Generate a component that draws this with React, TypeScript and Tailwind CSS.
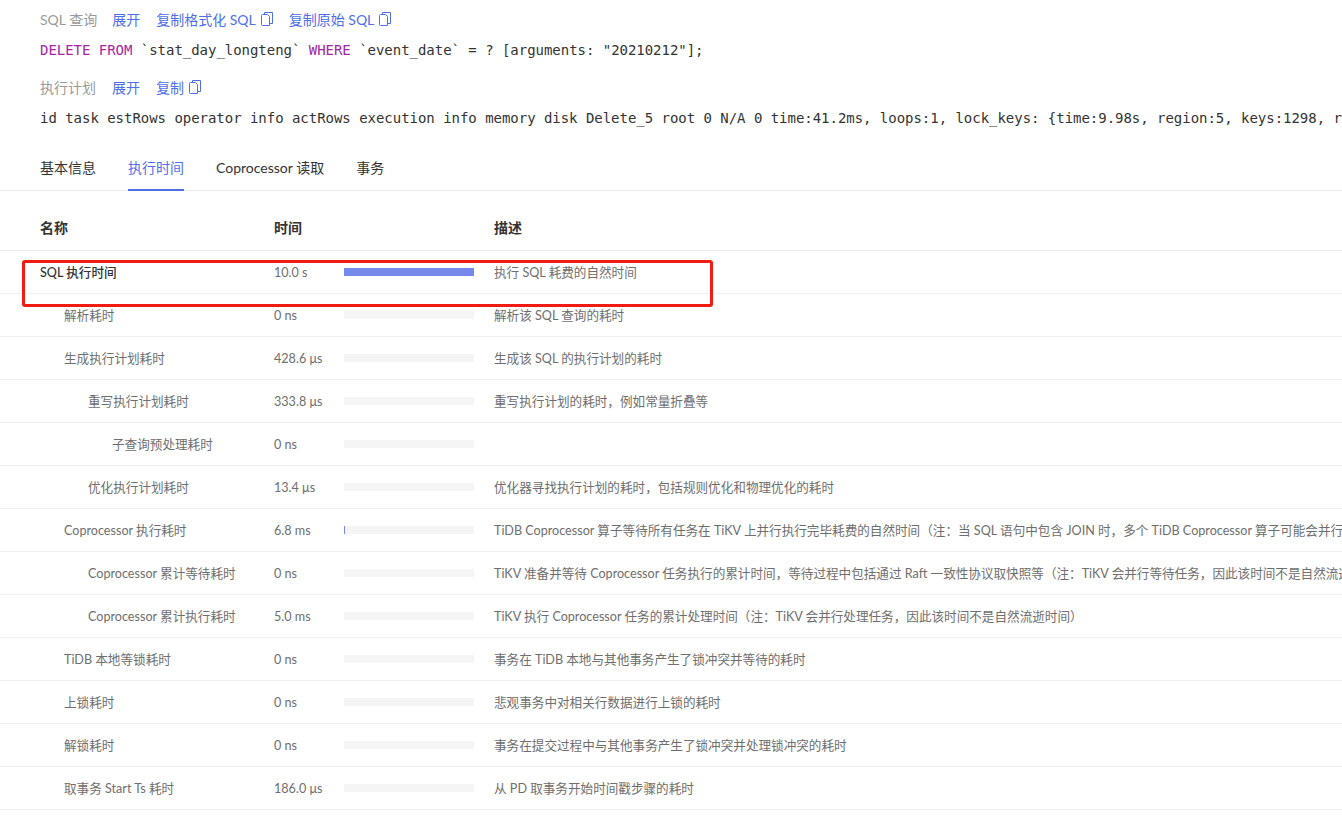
const fontSans = "font-['Lato','Noto_Sans_CJK_SC',sans-serif]";
const mono = "font-['DejaVu_Sans_Mono',monospace] tracking-[-0.03px]";

function CopyIcon() {
  return (
    <svg width="12" height="14" viewBox="0 0 12 14" fill="none" className="ml-[5px] inline-block">
      <path d="M3.5 2 L3.5 0.5 L11.5 0.5 L11.5 11.5 L9 11.5" stroke="#4f6fe8" strokeWidth="1" />
      <path d="M1.5 2.5 L6.5 2.5 L8.5 4.5 L8.5 13.5 L1.5 13.5 Q0.5 13.5 0.5 12.5 L0.5 3.5 Q0.5 2.5 1.5 2.5 Z" stroke="#4f6fe8" strokeWidth="1" />
    </svg>
  );
}

const rows: { name: string; indent: string; time: string; bar: number; desc: string; bold?: boolean }[] = [
  { name: "SQL 执行时间", indent: "pl-10", time: "10.0 s", bar: 130, desc: "执行 SQL 耗费的自然时间", bold: true },
  { name: "解析耗时", indent: "pl-16", time: "0 ns", bar: 0, desc: "解析该 SQL 查询的耗时" },
  { name: "生成执行计划耗时", indent: "pl-16", time: "428.6 μs", bar: 0, desc: "生成该 SQL 的执行计划的耗时" },
  { name: "重写执行计划耗时", indent: "pl-22", time: "333.8 μs", bar: 0, desc: "重写执行计划的耗时，例如常量折叠等" },
  { name: "子查询预处理耗时", indent: "pl-28", time: "0 ns", bar: 0, desc: "" },
  { name: "优化执行计划耗时", indent: "pl-22", time: "13.4 μs", bar: 0, desc: "优化器寻找执行计划的耗时，包括规则优化和物理优化的耗时" },
  { name: "Coprocessor 执行耗时", indent: "pl-16", time: "6.8 ms", bar: 1, desc: "TiDB Coprocessor 算子等待所有任务在 TiKV 上并行执行完毕耗费的自然时间（注：当 SQL 语句中包含 JOIN 时，多个 TiDB Coprocessor 算子可能会并行执行，因此该时间不一定等于实际时间）" },
  { name: "Coprocessor 累计等待耗时", indent: "pl-22", time: "0 ns", bar: 0, desc: "TiKV 准备并等待 Coprocessor 任务执行的累计时间，等待过程中包括通过 Raft 一致性协议取快照等（注：TiKV 会并行等待任务，因此该时间不是自然流逝时间）" },
  { name: "Coprocessor 累计执行耗时", indent: "pl-22", time: "5.0 ms", bar: 0, desc: "TiKV 执行 Coprocessor 任务的累计处理时间（注：TiKV 会并行处理任务，因此该时间不是自然流逝时间）" },
  { name: "TiDB 本地等锁耗时", indent: "pl-16", time: "0 ns", bar: 0, desc: "事务在 TiDB 本地与其他事务产生了锁冲突并等待的耗时" },
  { name: "上锁耗时", indent: "pl-16", time: "0 ns", bar: 0, desc: "悲观事务中对相关行数据进行上锁的耗时" },
  { name: "解锁耗时", indent: "pl-16", time: "0 ns", bar: 0, desc: "事务在提交过程中与其他事务产生了锁冲突并处理锁冲突的耗时" },
  { name: "取事务 Start Ts 耗时", indent: "pl-16", time: "186.0 μs", bar: 0, desc: "从 PD 取事务开始时间戳步骤的耗时" },
];

export default function App() {
  return (
    <div className={`relative h-[815px] w-[1342px] overflow-hidden bg-white ${fontSans} text-[12.6px] text-[#6e6e6e]`}>
      <div className="px-10 pt-[9px] text-[14px]">
        <div className="flex h-[20px] items-center">
          <span className="mr-[15px] text-[#999]">SQL 查询</span>
          <span className="mr-4 text-[#4f6fe8]">展开</span>
          <span className="mr-4 flex items-center text-[#4f6fe8]">复制格式化 SQL<CopyIcon /></span>
          <span className="flex items-center text-[#4f6fe8]">复制原始 SQL<CopyIcon /></span>
        </div>
        <div className={`mt-[11px] h-[20px] whitespace-nowrap ${mono} text-[14px] leading-[20px] text-[#333]`}>
          <span className="text-[#a626a4]">DELETE FROM</span> `stat_day_longteng` <span className="text-[#a626a4]">WHERE</span> `event_date` = ? [arguments: "20210212"];
        </div>
        <div className="mt-[17px] flex h-[20px] items-center">
          <span className="mr-4 text-[#999]">执行计划</span>
          <span className="mr-4 text-[#4f6fe8]">展开</span>
          <span className="flex items-center text-[#4f6fe8]">复制<CopyIcon /></span>
        </div>
        <div className={`mt-[11px] h-[20px] whitespace-nowrap ${mono} text-[14px] leading-[20px] text-[#333]`}>
          id task estRows operator info actRows execution info memory disk Delete_5 root 0 N/A 0 time:41.2ms, loops:1, lock_keys: {"{"}time:9.98s, region:5, keys:1298, resolve_lock:1ms
        </div>
      </div>

      <div className="mt-[19px] flex h-[44px] gap-8 border-b border-[#ebebeb] px-10 pb-[3px] text-[14px] text-[#333]">
        <div className="flex items-center">基本信息</div>
        <div className="-mb-[4px] flex items-center border-b-2 border-[#4f6fe8] pb-[2px] text-[#4f6fe8]">执行时间</div>
        <div className="flex items-center">Coprocessor 读取</div>
        <div className="flex items-center">事务</div>
      </div>

      <div className="mt-[15px] flex h-[45px] items-center border-b border-[#ebebeb] pb-[2px] text-[14px] font-semibold text-[#333]">
        <div className="w-[274px] shrink-0 pl-10">名称</div>
        <div className="w-[220px] shrink-0">时间</div>
        <div>描述</div>
      </div>

      {rows.map((r) => (
        <div key={r.name} className="flex h-[43px] items-center whitespace-nowrap border-b border-[#f0f0f0]">
          <div className={`w-[274px] shrink-0 pt-[2px] ${r.indent} ${r.bold ? "font-medium text-[#333]" : ""}`}>{r.name}</div>
          <div className="w-[70px] shrink-0 pt-[2px]">{r.time}</div>
          <div className="h-2 w-[130px] shrink-0 bg-[#f5f5f5]">
            {r.bar > 0 && <div className="h-2 bg-[#7589ec]" style={{ width: r.bar }} />}
          </div>
          <div className="ml-5 shrink-0 pt-[2px]">{r.desc}</div>
        </div>
      ))}

      <div className="absolute left-[22px] top-[260px] h-[47px] w-[691px] rounded-[3px] border-[3px] border-[#f01c14]" />
    </div>
  );
}
